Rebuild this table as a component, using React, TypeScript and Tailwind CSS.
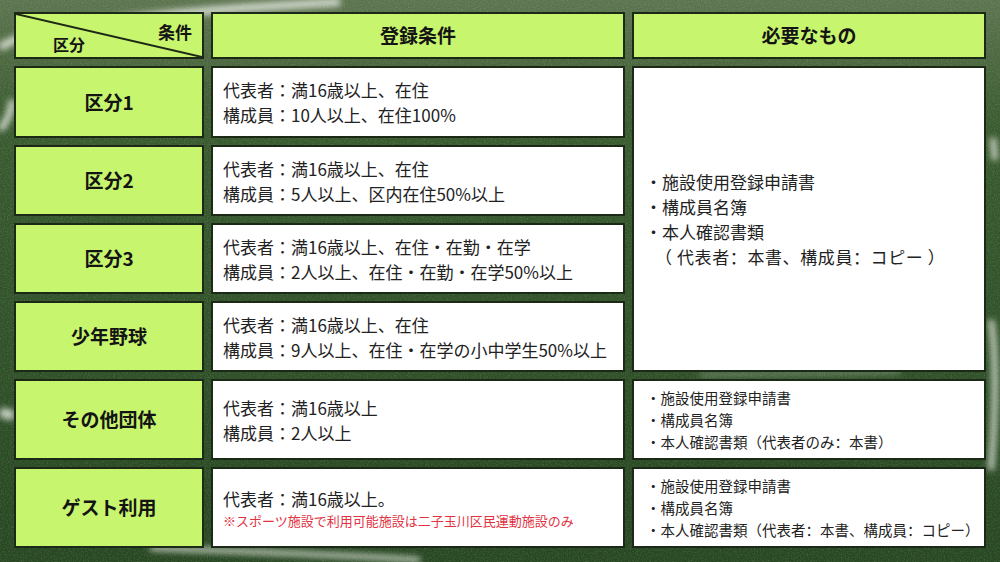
import React from 'react'

const labelCell = 'bg-[#c8f56e] border-2 border-[#1d2917] flex items-center justify-center font-bold text-[19px] text-[#141414]'
const textCell = 'bg-white border-2 border-[#1d2917] flex flex-col justify-center pl-[10px] text-[17px] leading-[25px] text-[#222]'
const smallCell = 'bg-white border-2 border-[#1d2917] flex flex-col justify-center pl-[12px] text-[14.5px] leading-[22px] text-[#222]'
const scFont = { fontFamily: '"Noto Sans CJK SC", "Noto Sans CJK JP", sans-serif' }

const rows = [
  { label: '区分1', lines: ['代表者：満16歳以上、在住', '構成員：10人以上、在住100%'] },
  { label: '区分2', lines: ['代表者：満16歳以上、在住', '構成員：5人以上、区内在住50%以上'] },
  { label: '区分3', lines: ['代表者：満16歳以上、在住・在勤・在学', '構成員：2人以上、在住・在勤・在学50%以上'] },
  { label: '少年野球', lines: ['代表者：満16歳以上、在住', '構成員：9人以上、在住・在学の小中学生50%以上'] },
]

// grass background drawing
const Field = () => (
  <svg className='absolute inset-0 w-full h-full' viewBox='0 0 1000 562' preserveAspectRatio='none'>
    <defs>
      <filter id='blur'><feGaussianBlur stdDeviation='3' /></filter>
      <filter id='grass' x='0' y='0' width='100%' height='100%'>
        <feTurbulence type='fractalNoise' baseFrequency='0.7' numOctaves='2' seed='7' />
        <feColorMatrix type='matrix' values='0 0 0 0 0.55  0 0 0 0 0.75  0 0 0 0 0.45  0 0 0 1.2 -0.5' />
      </filter>
    </defs>
    <rect width='1000' height='562' filter='url(#grass)' opacity='0.3' />
    <g filter='url(#blur)' fill='none' stroke='#eef0ea' strokeOpacity='0.8'>
      <path d='M0 48 C 20 30, 120 14, 340 2' strokeWidth='8' />
      <path d='M0 130 C 8 120, 12 110, 12 100' strokeWidth='7' />
      <path d='M993 138 L 995 160' strokeWidth='6' />
      <path d='M991 320 C 997 360, 995 420, 991 470' strokeWidth='6' />
      <path d='M0 412 L 14 416' strokeWidth='10' />
      <path d='M150 548 C 260 552, 360 556, 420 560' strokeWidth='5' />
      <path d='M700 375 C 760 374, 820 373, 900 372' strokeWidth='3' strokeOpacity='0.5' />
    </g>
  </svg>
)

export default function App() {
  return (
    <div
      className='relative w-[1000px] h-[562px] overflow-hidden bg-[linear-gradient(180deg,#5d7450_0%,#3a5a30_22%,#31522a_55%,#274622_100%)]'
      style={{ fontFamily: '"Noto Sans CJK JP", "Noto Sans", sans-serif' }}
    >
      <Field />
      <div className='relative grid grid-cols-[190px_414px_354px] grid-rows-[47px_72px_71px_71px_71px_81px_81px] gap-x-[7px] gap-y-[7px] pl-[14px] pt-[12px]'>
        {/* header */}
        <div className='relative bg-[#c8f56e] border-2 border-[#1d2917] font-bold text-[#141414]'>
          <svg className='absolute inset-0 w-full h-full' viewBox='0 0 100 100' preserveAspectRatio='none'>
            <line x1='0' y1='0' x2='100' y2='100' stroke='#1d2917' strokeWidth='2' vectorEffect='non-scaling-stroke' />
          </svg>
          <span className='absolute right-[10px] top-[9px] text-[17px] leading-none'>条件</span>
          <span className='absolute left-[37px] top-[22px] text-[16px] leading-none'>区分</span>
        </div>
        <div className={labelCell}>登録条件</div>
        <div className={labelCell}>必要なもの</div>

        {rows.map((r, i) => (
          <React.Fragment key={r.label}>
            <div className={labelCell} style={{ gridRow: i + 2, gridColumn: 1 }}>{r.label}</div>
            <div className={textCell} style={{ gridRow: i + 2, gridColumn: 2 }}>
              {r.lines.map(l => <p key={l}>{l}</p>)}
            </div>
          </React.Fragment>
        ))}

        <div
          className='row-start-2 row-span-4 col-start-3 bg-white border-2 border-[#1d2917] flex flex-col justify-center pl-[11px] text-[17px] leading-[25px] text-[#222]'
          style={scFont}
        >
          <p>・施設使用登録申請書</p>
          <p>・構成員名簿</p>
          <p>・本人確認書類</p>
          <p className='pl-[10px] tracking-[0.6px]'>（ 代表者：本書、構成員：コピー ）</p>
        </div>

        <div className={labelCell}>その他団体</div>
        <div className={textCell}>
          <p>代表者：満16歳以上</p>
          <p>構成員：2人以上</p>
        </div>
        <div className={smallCell} style={scFont}>
          <p>・施設使用登録申請書</p>
          <p>・構成員名簿</p>
          <p>・本人確認書類（代表者のみ：本書）</p>
        </div>

        <div className={labelCell}>ゲスト利用</div>
        <div className='bg-white border-2 border-[#1d2917] flex flex-col justify-center pl-[10px] pt-[2px] text-[#222]'>
          <p className='text-[17px] leading-[24px]'>代表者：満16歳以上。</p>
          <p className='text-[13px] leading-[20px] text-[#e2323f]'>※スポーツ施設で利用可能施設は二子玉川区民運動施設のみ</p>
        </div>
        <div className={smallCell} style={scFont}>
          <p>・施設使用登録申請書</p>
          <p>・構成員名簿</p>
          <p>・本人確認書類（代表者：本書、構成員：コピー）</p>
        </div>
      </div>
    </div>
  )
}
